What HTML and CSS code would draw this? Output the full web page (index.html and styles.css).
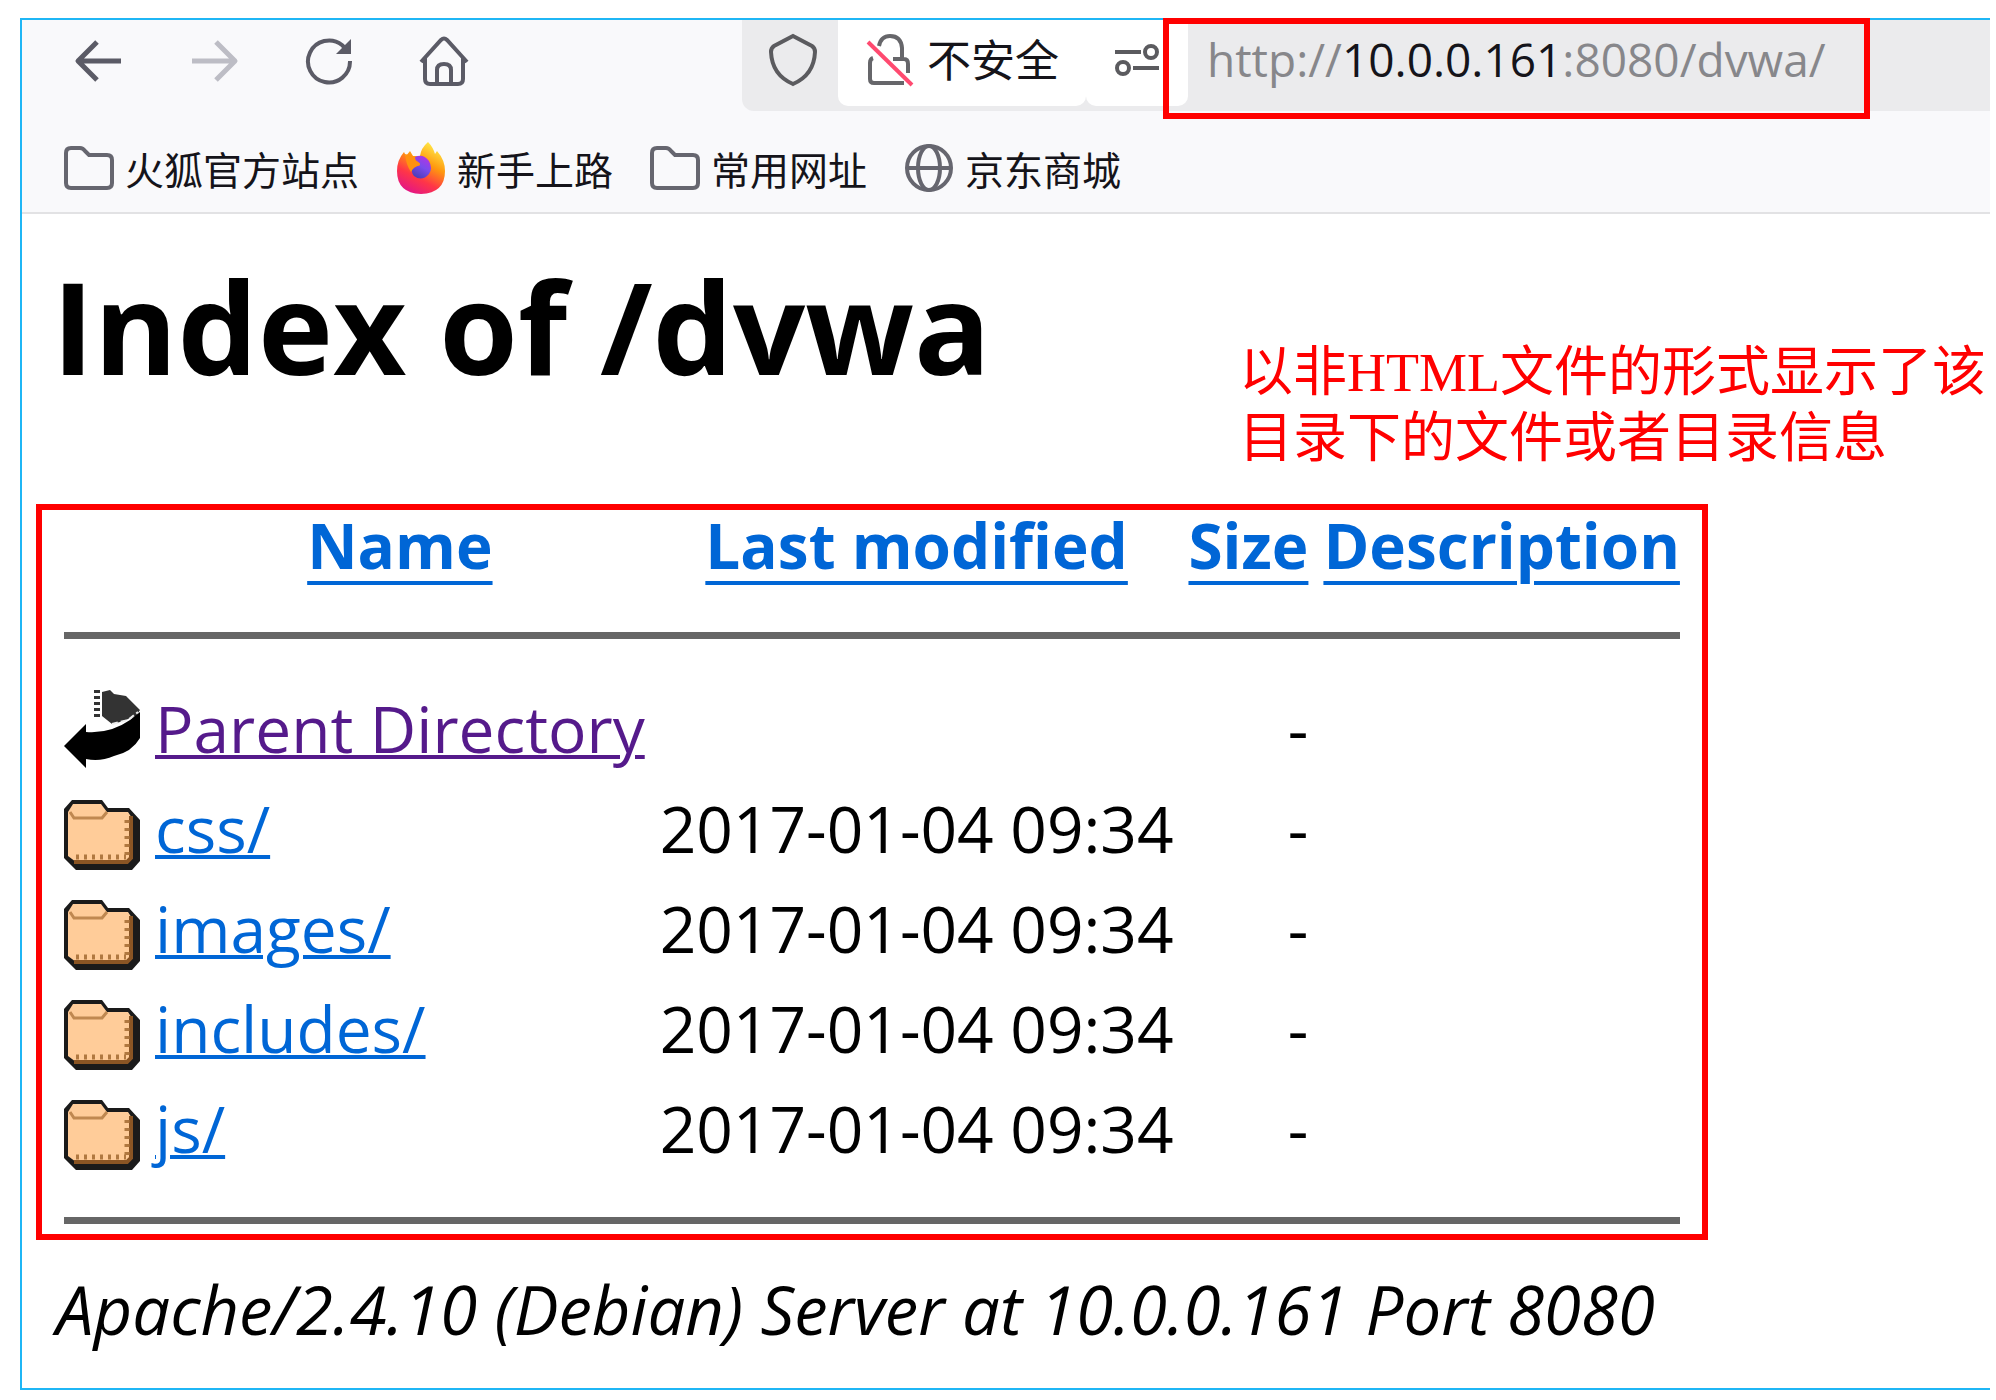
FILE: index.html
```
<!DOCTYPE html>
<html lang="zh-CN">
<head>
	<meta charset="utf-8">
	<title>Index of /dvwa</title>
	<link rel="stylesheet" href="styles.css">
</head>
<body>
<svg class="sprite" width="0" height="0">
	<symbol id="folder-line" viewBox="0 0 50 44">
		<path d="M2 7Q2 2 7 2H16Q19 2 21 5L25 9H43Q48 9 48 14V37Q48 42 43 42H7Q2 42 2 37Z" fill="none" stroke="#66666f" stroke-width="4"/>
	</symbol>
	<symbol id="folder" viewBox="0 0 76 70">
		<path d="M0 9L8 0H38L44 8H65L76 20V61L68 70H12L0 58Z" fill="#1a1a1a"/>
		<path d="M4 12L9 4H37L43 12H64L68 18V58L62 62H12L4 56Z" fill="#fc9"/>
		<path d="M67 16V58L63 62H10" fill="none" stroke="#8a5524" stroke-width="4"/>
		<path d="M6 12L10 18H38L43 12" fill="none" stroke="#c08850" stroke-width="3"/>
		<path d="M12 57H62M63 20V58" fill="none" stroke="#b07840" stroke-width="5" stroke-dasharray="3 5"/>
	</symbol>
</svg>

<div class="window">
	<div class="toolbar">
		<div class="nav">
			<button aria-label="Back"><svg width="50" height="50" viewBox="0 0 50 50"><path d="M47 25H5M23 6L4 25L23 44" fill="none" stroke="#5b5b66" stroke-width="5" stroke-linejoin="round"/></svg></button>
			<button aria-label="Forward" disabled><svg width="50" height="50" viewBox="0 0 50 50"><path d="M3 25H45M27 6L46 25L27 44" fill="none" stroke="#bdbdc5" stroke-width="5" stroke-linejoin="round"/></svg></button>
			<button aria-label="Reload"><svg width="50" height="50" viewBox="0 0 50 50"><path d="M46 25A21 21 0 1 1 38 9L42 13" fill="none" stroke="#5b5b66" stroke-width="4"/><path d="M47 3V18H32Z" fill="#5b5b66"/></svg></button>
			<button aria-label="Home"><svg width="50" height="50" viewBox="0 0 50 50"><path d="M2 26L22 4Q25 1 28 4L48 26M6 22V43Q6 48 11 48H39Q44 48 44 43V22M18 48V34Q18 28 25 28T32 34V48" fill="none" stroke="#5b5b66" stroke-width="4"/></svg></button>
		</div>
		<div class="urlbar">
			<button class="shield" aria-label="Protection"><svg width="50" height="54" viewBox="0 0 50 54"><path d="M25 3L44 13Q47 15 47 19Q46 42 25 51Q4 42 3 19Q3 15 6 13Z" fill="none" stroke="#5b5b5f" stroke-width="4"/></svg></button>
			<button class="insecure"><svg width="48" height="54" viewBox="0 0 48 54"><path d="M13 13Q15 3 24 3Q35 3 36 15V25M7 25Q4 26 4 30V46Q4 50 8 50H38M27 26H38Q42 26 42 31V40" fill="none" stroke="#66666a" stroke-width="4"/><path d="M2 9L46 52" stroke="#ff4a70" stroke-width="4"/></svg>不安全</button>
			<button class="permissions" aria-label="Permissions"><svg width="46" height="36" viewBox="0 0 46 36"><g fill="none" stroke="#5b5b5f" stroke-width="4"><path d="M1 10H27M19 26H45"/><circle cx="37" cy="10" r="6"/><circle cx="9" cy="26" r="6"/></g></svg></button>
			<div class="address">http://<b>10.0.0.161</b>:8080/dvwa/</div>
		</div>
	</div>

	<nav class="bookmarks">
		<a href="#"><svg width="50" height="44"><use href="#folder-line"/></svg>火狐官方站点</a>
		<a href="#">
			<svg width="50" height="52" viewBox="0 0 50 52">
				<defs>
					<linearGradient id="fire" x1="0.8" y1="0" x2="0.3" y2="1"><stop offset="0" stop-color="#fff44f"/><stop offset="0.4" stop-color="#ff980e"/><stop offset="0.7" stop-color="#ff3647"/><stop offset="1" stop-color="#e31587"/></linearGradient>
					<linearGradient id="globe" x1="0.8" y1="0" x2="0.3" y2="1"><stop offset="0" stop-color="#b833e1"/><stop offset="0.5" stop-color="#7a4bed"/><stop offset="1" stop-color="#4a3db5"/></linearGradient>
				</defs>
				<path d="M32 0Q37 5 39 12L41 9Q49 18 49 29Q49 51 25 52Q1 51 1 29Q1 18 8 10L10 14L14 9L17 14Q21 14 24 14Q25 6 32 0Z" fill="url(#fire)"/>
				<path d="M19 15Q27 11 33 19Q37 26 33 32Q26 40 18 34Q14 29 17 24Q24 25 24 22Q19 19 19 15Z" fill="url(#globe)"/>
				<path d="M9 12L17 14L19 18Q25 21 24 23Q17 25 15 30Q10 23 9 12Z" fill="#ff920f"/>
			</svg>新手上路</a>
		<a href="#"><svg width="50" height="44"><use href="#folder-line"/></svg>常用网址</a>
		<a href="#"><svg width="50" height="50" viewBox="0 0 50 50"><g fill="none" stroke="#66666f" stroke-width="4"><circle cx="25" cy="25" r="22"/><ellipse cx="25" cy="25" rx="11" ry="22"/><path d="M3 25H47"/></g></svg>京东商城</a>
	</nav>

	<div class="page">
		<div class="top">
			<h1>Index of /dvwa</h1>
			<p class="note">以非HTML文件的形式显示了该<br>目录下的文件或者目录信息</p>
		</div>

		<div class="listing">
			<table>
				<tr><th></th><th><a href="#">Name</a></th><th><a href="#">Last modified</a></th><th><a href="#">Size</a></th><th><a href="#">Description</a></th></tr>
				<tr><th colspan="5"><hr></th></tr>
				<tr>
					<td><svg class="back" width="76" height="78" viewBox="0 0 76 78">
						<path d="M38 2L46 0L50 4L62 6L76 20L72 26L56 32L48 34L38 26Z" fill="#333"/>
						<path d="M33 0V28" stroke="#333" stroke-width="6" stroke-dasharray="3 3"/>
						<path d="M0 56L22 34V42Q46 44 66 30L76 22V48Q68 62 50 66Q36 72 22 69V78Z" fill="#000"/>
						<path d="M48 34L64 30L74 22" fill="none" stroke="#eee" stroke-width="2" stroke-dasharray="6 3"/>
					</svg></td>
					<td><a class="visited" href="#">Parent Directory</a></td><td></td><td class="size">-</td><td></td>
				</tr>
				<tr><td><svg class="icon" width="76" height="70"><use href="#folder"/></svg></td><td><a href="#">css/</a></td><td>2017-01-04 09:34</td><td class="size">-</td><td></td></tr>
				<tr><td><svg class="icon" width="76" height="70"><use href="#folder"/></svg></td><td><a href="#">images/</a></td><td>2017-01-04 09:34</td><td class="size">-</td><td></td></tr>
				<tr><td><svg class="icon" width="76" height="70"><use href="#folder"/></svg></td><td><a href="#">includes/</a></td><td>2017-01-04 09:34</td><td class="size">-</td><td></td></tr>
				<tr><td><svg class="icon" width="76" height="70"><use href="#folder"/></svg></td><td><a href="#">js/</a></td><td>2017-01-04 09:34</td><td class="size">-</td><td></td></tr>
				<tr><th colspan="5"><hr class="last"></th></tr>
			</table>
		</div>

		<address>Apache/2.4.10 (Debian) Server at 10.0.0.161 Port 8080</address>
	</div>
</div>
</body>
</html>
```
FILE: styles.css
```
*{
	box-sizing: border-box;
}
body{
	margin: 0;
	padding: 18px 6px 10px 20px;
	background-color: #fff;
	color: #000;
	font-family: "Open Sans", "Noto Sans CJK SC", sans-serif;
	font-size: 64px;
}
.sprite{
	position: absolute;
}
svg{
	flex: none;
}
button{
	display: flex;
	align-items: center;
	margin: 0;
	padding: 0;
	border: 0;
	background: none;
	font: inherit;
	color: inherit;
}
.window{
	border: 2px solid #1fb6f5;
	border-right: 0;
}

/* browser toolbar */
.toolbar{
	display: flex;
	gap: 273px;
	height: 110px;
	background-color: #f9f9fb;
}
.nav{
	display: flex;
	gap: 65px;
	height: 82px;
	padding-left: 52px;
}
.urlbar{
	display: flex;
	flex: 1;
	height: 91px;
	background-color: #ebebed;
	border-bottom-left-radius: 12px;
	font-size: 44px;
	line-height: 60px;
}
.urlbar button{
	height: 86px;
	padding-bottom: 6px;
	background-color: #fff;
	border-radius: 0 0 10px 10px;
}
.urlbar .shield{
	padding-left: 26px;
	padding-right: 20px;
	background: none;
}
.insecure{
	gap: 13px;
	width: 248px;
	padding-left: 28px;
	color: #15141a;
}
.permissions{
	width: 102px;
	padding-left: 28px;
}
.address{
	height: 101px;
	margin-left: -25px;
	margin-top: -2px;
	padding: 5px 38px 0;
	border: 6px solid #f00;
	color: #87878b;
	font-size: 46px;
	white-space: nowrap;
}
.address b{
	color: #15141a;
	font-weight: normal;
}
.bookmarks{
	display: flex;
	gap: 37px;
	height: 84px;
	padding: 0 42px 6px;
	background-color: #f9f9fb;
	border-bottom: 2px solid #e2e2e4;
	font-size: 39px;
}
.bookmarks a{
	display: flex;
	align-items: center;
	gap: 11px;
	color: #15141a;
	text-decoration: none;
}

/* directory listing */
.page{
	padding: 32px 0 34px 14px;
}
.top{
	display: flex;
	justify-content: space-between;
}
h1{
	margin: 0 0 0 16px;
	font-size: 127px;
	line-height: 160px;
}
.note{
	margin: 94px 4px 0 0;
	color: #f00;
	font-family: "Liberation Serif", "Noto Sans CJK SC", serif;
	font-size: 54px;
	line-height: 66px;
	white-space: nowrap;
}
.listing{
	width: fit-content;
	margin-top: 32px;
	padding: 0 7px;
	border: 6px solid #f00;
}
table{
	border-spacing: 15px 0;
}
th, td{
	padding: 0;
	line-height: 100px;
	text-align: left;
	white-space: nowrap;
}
a{
	color: #0066d6;
	text-decoration-thickness: 4px;
}
a.visited{
	color: #551a8b;
}
th{
	font-size: 62px;
	line-height: 70px;
	text-align: center;
}
th a{
	text-underline-offset: 12px;
}
.back, .icon{
	display: block;
}
.icon{
	margin-top: 12px;
}
.size{
	text-align: right;
}
hr{
	height: 7px;
	margin: 52px 0 40px;
	border: 0;
	background-color: #666;
}
hr.last{
	margin: 38px 0 10px;
}
address{
	margin: 24px 0 0 20px;
	font-size: 67px;
	line-height: 90px;
	white-space: nowrap;
}
```
